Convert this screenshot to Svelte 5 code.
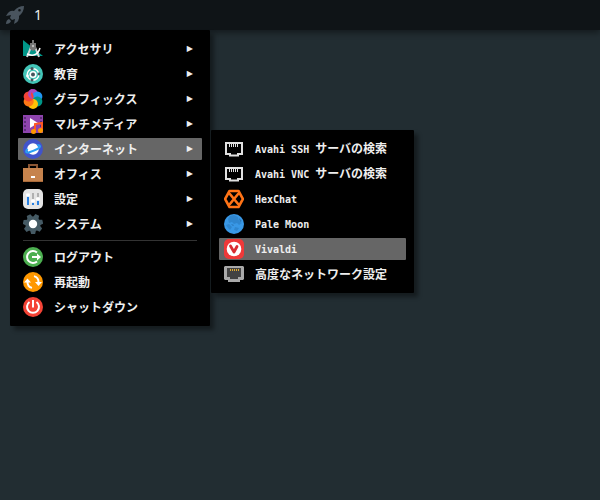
<script>
  const categories = [
    { icon: "accessories", label: "アクセサリ" },
    { icon: "education", label: "教育" },
    { icon: "graphics", label: "グラフィックス" },
    { icon: "multimedia", label: "マルチメディア" },
    {
      icon: "internet",
      label: "インターネット",
      items: [
        { icon: "port", latin: "Avahi SSH ", label: "サーバの検索" },
        { icon: "port", latin: "Avahi VNC ", label: "サーバの検索" },
        { icon: "hexchat", latin: "HexChat" },
        { icon: "palemoon", latin: "Pale Moon" },
        { icon: "vivaldi", latin: "Vivaldi" },
        { icon: "network", label: "高度なネットワーク設定" },
      ],
    },
    { icon: "office", label: "オフィス" },
    { icon: "settings", label: "設定" },
    { icon: "system", label: "システム" },
  ];

  const session = [
    { icon: "logout", label: "ログアウト" },
    { icon: "restart", label: "再起動" },
    { icon: "shutdown", label: "シャットダウン" },
  ];

  let menuOpen = $state(true);
  let openCategory = $state("internet");
  let activeItem = $state("vivaldi");
  let workspace = $state(1);

  const petals = ["#ab47bc", "#2196f3", "#009688", "#ffc107", "#ff7816", "#f44336"];
</script>

{#snippet icon(name)}
  <svg class="icon" viewBox="0 0 20 20" aria-hidden="true">
    {#if name === "accessories"}
      <path d="M0 1L20 17H0Z" fill="#009688" />
      <path d="M8 8L4 18M12 8L16 18" stroke="#cfd3d4" stroke-width="2" />
      <path d="M4 15Q14 19 17 9" fill="none" stroke="#fff" stroke-width="1.5" />
      <path d="M10 1V5" stroke="#757575" stroke-width="2" />
      <path d="M7 4H13V10L10 12L7 10Z" fill="#757575" />
      <circle cx="10" cy="7" r="1.2" fill="#bdbdbd" />
    {:else if name === "education"}
      <circle cx="10" cy="10" r="10" fill="#43c5b8" />
      <circle cx="10" cy="10.5" r="5.8" fill="none" stroke="#fff" stroke-width="1.4" />
      <circle cx="10" cy="10.5" r="3.6" fill="#fff" />
      <circle cx="10" cy="10.5" r="2" fill="#45545c" />
      <g fill="#45545c">
        <circle cx="9" cy="4.6" r="1.6" />
        <circle cx="16" cy="10" r="1.4" />
        <circle cx="9" cy="16" r="1.5" />
      </g>
      <circle cx="4.500" cy="12" r="1.4" fill="#fff" />
    {:else if name === "graphics"}
      {#each petals as color, i}
        <circle cx="10" cy="5" r="5" fill={color} transform="rotate({i * 60} 10 10)" />
      {/each}
      <path d="M10 10A5 5 0 0 1 10 0A8 8 0 0 0 10 10Z" fill="#ab47bc" />
    {:else if name === "multimedia"}
      <path d="M0 1H20V19H0Z" fill="#8e44ad" />
      <path d="M2 3V18M18 3V18" stroke="#5e2d79" stroke-width="2" stroke-dasharray="2 2" />
      <path d="M7 4L15 9L7 14Z" fill="#fff" />
      <path d="M12 17V10L19 9V16" fill="none" stroke="#ff5722" stroke-width="2" />
      <circle cx="10.500" cy="17.500" r="2.500" fill="#ff9800" />
      <circle cx="17.500" cy="16.500" r="2.500" fill="#ff9800" />
    {:else if name === "internet"}
      <circle cx="10" cy="10" r="10" fill="#4154cb" />
      <circle cx="10" cy="10" r="5.8" fill="#fff" />
      <path
        d="M4.500 10C2 13 3 14.500 7 13C12 11.500 17 9 17 7.500C17 6 15 6 14 6.500"
        fill="none"
        stroke="#29a0f4"
        stroke-width="2"
      />
    {:else if name === "office"}
      <path d="M6 5V1H14V5" fill="none" stroke="#8b5735" stroke-width="2" />
      <path d="M0 4H20V18H0Z" fill="#c6834d" />
      <path d="M0 17.500H20" stroke="#a96a3a" />
      <path d="M8 12H12V14H8Z" fill="#fff" />
    {:else if name === "settings"}
      <rect width="20" height="20" rx="5" fill="#e4e4e4" />
      <path d="M5 4V16M10 4V16M15 4V16" stroke="#b0b0b0" stroke-width="2" />
      <path d="M5 7V16M10 13V16M15 11V16" stroke="#2980e0" stroke-width="2" />
      <g fill="#fff">
        <circle cx="5" cy="6" r="2" />
        <circle cx="10" cy="12" r="2" />
        <circle cx="15" cy="10" r="2" />
      </g>
    {:else if name === "system"}
      <g fill="#455a64">
        <circle cx="10" cy="10" r="7.6" />
        {#each [0, 1, 2, 3, 4, 5, 6] as tooth}
          <path d="M7 4L8 0H12L13 4Z" transform="rotate({(tooth * 360) / 7 + 25} 10 10)" />
        {/each}
      </g>
      <circle cx="10" cy="10" r="4.2" fill="#fff" />
    {:else if name === "logout"}
      <circle cx="10" cy="10" r="10" fill="#4caf50" />
      <path d="M14 5.500A6 6 0 1 0 14 14.500" fill="none" stroke="#fff" stroke-width="2" />
      <path d="M9 9H14V6.500L18 10L14 13.500V11H9Z" fill="#fff" />
    {:else if name === "restart"}
      <circle cx="10" cy="10" r="10" fill="#ff9800" />
      <path
        d="M4.500 10A6 6 0 0 0 9 15.900M15.500 10A6 6 0 0 0 11 4.100"
        fill="none"
        stroke="#fff"
        stroke-width="2"
      />
      <path
        d="M4.500 10Q4.500 6.500 7 5M15.500 10Q15.500 13.500 13 15"
        fill="none"
        stroke="#ff9800"
        stroke-width="2"
      />
      <path d="M1 10.500L4.500 6.500L8 10.500ZM12 10L19 10L15.500 14Z" fill="#fff" />
    {:else if name === "shutdown"}
      <circle cx="10" cy="10" r="10" fill="#f44336" />
      <path
        d="M6.500 5A6 6 0 1 0 13.500 5M10 3V10.500"
        fill="none"
        stroke="#fff"
        stroke-width="2"
      />
    {:else if name === "port"}
      <path
        d="M2 4H18V15H14V16.500H6V15H2Z"
        fill="none"
        stroke="#e0e0e0"
        stroke-width="2"
      />
      <path d="M5.500 4V8M7.500 4V8M9.500 4V8M11.500 4V8M13.500 4V8" stroke="#e0e0e0" />
    {:else if name === "hexchat"}
      <path
        d="M5.500 2H14.500L19 10L14.500 18H5.500L1 10ZM5.500 4.500L14.500 15.500M14.500 4.500L5.500 15.500"
        fill="none"
        stroke="#ff7316"
        stroke-width="2.600"
        stroke-linejoin="round"
      />
    {:else if name === "palemoon"}
      <circle cx="10" cy="10" r="10" fill="#3998e6" />
      <path
        d="M6 2L10 1L14 3L15 7L18 9L15 11L13 9L10 10L8 8L5 9L4 5ZM2 11L5 10L8 13L6 16L4 14ZM11 13L15 14L13 17L10 16Z"
        fill="#2f86cf"
      />
      <path d="M15 4L18 7L16 8ZM7 10L10 11L9 12Z" fill="#2872b2" />
    {:else if name === "vivaldi"}
      <rect width="20" height="20" rx="5" fill="#ef3939" />
      <circle cx="10" cy="10" r="7.3" fill="#fff" />
      <path
        d="M6.500 7L10 13L13 7.500"
        fill="none"
        stroke="#d92d32"
        stroke-width="2.800"
        stroke-linecap="round"
        stroke-linejoin="round"
      />
    {:else if name === "network"}
      <path d="M1 2H19L20 3V15L19 16H16V18H4V16H1L0 15V3Z" fill="#a9a9a9" />
      <path d="M3 4H17V13H14V15H6V13H3Z" fill="#424242" />
      <path d="M6.500 5V7M8.500 5V7M10.500 5V7M12.500 5V7M14.500 5V7" stroke="#e5ad32" />
    {/if}
  </svg>
{/snippet}

<header class="panel">
  <button
    class="launcher"
    type="button"
    aria-label="メニュー"
    aria-expanded={menuOpen}
    onclick={() => (menuOpen = !menuOpen)}
  >
    <svg class="icon" viewBox="0 0 20 20" aria-hidden="true">
      <path
        fill="#49545e"
        fill-rule="evenodd"
        d="M19 1Q13 1 9 6Q4 5 1 11L6 10L5 13L7 15L10 14L9 19Q15 16 14 11Q19 7 19 1ZM14.500 4A1.300 1.300 0 1 1 14.500 6.600A1.300 1.300 0 0 1 14.500 4Z"
      />
      <path d="M4 14Q1 15 1 19Q5 19 6 16Z" fill="#49545e" />
    </svg>
  </button>
  <span class="workspace">{workspace}</span>
</header>

{#if menuOpen}
  <nav class="menu root-menu">
    <ul>
      {#each categories as category}
        <li>
          <button
            class="entry"
            class:active={category.icon === openCategory}
            type="button"
            onclick={() => (openCategory = category.icon)}
          >
            {@render icon(category.icon)}
            <span class="label">{category.label}</span>
            <span class="arrow">▶</span>
          </button>
          {#if category.items && category.icon === openCategory}
            <ul class="menu submenu">
              {#each category.items as item}
                <li>
                  <button
                    class="entry"
                    class:active={item.icon === activeItem}
                    type="button"
                    onmouseenter={() => (activeItem = item.icon)}
                  >
                    {@render icon(item.icon)}
                    <span class="label">
                      {#if item.latin}<span class="latin">{item.latin}</span>{/if}{item.label ?? ""}
                    </span>
                  </button>
                </li>
              {/each}
            </ul>
          {/if}
        </li>
      {/each}
    </ul>
    <hr />
    <ul>
      {#each session as item}
        <li>
          <button class="entry" type="button">
            {@render icon(item.icon)}
            <span class="label">{item.label}</span>
          </button>
        </li>
      {/each}
    </ul>
  </nav>
{/if}

<style>
  :global(body) {
    min-height: 100vh;
    margin: 0;
    background: #222d32;
    color: #eee;
    font-family: "Noto Sans CJK JP", sans-serif;
  }

  .panel {
    display: flex;
    align-items: center;
    gap: 9px;
    height: 30px;
    padding: 0 5px;
    background: #0f1417;
    box-shadow: 0 3px 6px rgba(0, 0, 0, 0.4);
  }

  button {
    border: 0;
    padding: 0;
    background: none;
    color: inherit;
    font: inherit;
    cursor: pointer;
  }

  .launcher {
    display: flex;
  }

  .workspace {
    font-family: "Noto Sans", sans-serif;
    font-size: 14px;
    line-height: 20px;
  }

  .icon {
    display: block;
    flex: none;
    width: 20px;
    height: 20px;
  }

  .menu {
    box-sizing: border-box;
    padding: 8px;
    background: #000;
    border-radius: 1px;
    box-shadow: 4px 4px 4px rgba(0, 0, 0, 0.4);
  }

  .root-menu {
    position: relative;
    width: 200px;
    margin-left: 10px;
  }

  ul {
    display: flex;
    flex-direction: column;
    gap: 3px;
    margin: 0;
    padding: 0;
    list-style: none;
  }

  li {
    position: relative;
  }

  .submenu {
    position: absolute;
    top: -8px;
    left: calc(100% + 9px);
    width: max-content;
    min-width: 203px;
  }

  .entry {
    display: flex;
    align-items: center;
    width: 100%;
    height: 22px;
    padding: 0 9px 0 5px;
    border-radius: 1px;
    font-size: 12px;
    font-weight: 700;
    line-height: 20px;
    text-align: left;
    white-space: nowrap;
  }

  .entry.active {
    background: #666;
  }

  .label {
    flex: 1;
    margin-left: 11px;
  }

  .latin {
    font-family: "DejaVu Sans Mono", monospace;
    font-size: 10px;
    white-space: pre;
  }

  .arrow {
    font-family: "DejaVu Sans", sans-serif;
    font-size: 8px;
  }

  hr {
    height: 1px;
    margin: 5px;
    border: 0;
    background: #333;
  }
</style>
